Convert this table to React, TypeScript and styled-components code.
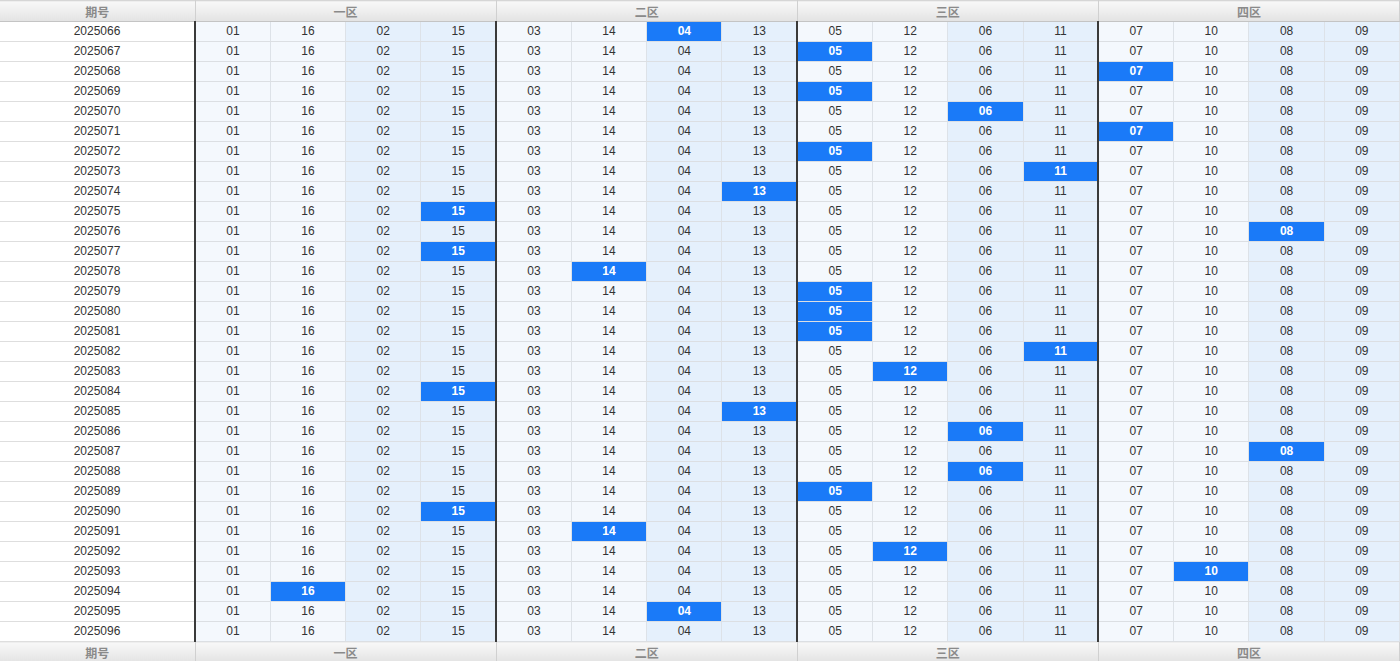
import React from "react";
import styled, { createGlobalStyle } from "styled-components";

const Global = createGlobalStyle`
  html, body { margin: 0; padding: 0; background: #fff; }
  body { font-family: "Liberation Sans", Arial, "Noto Sans CJK SC", sans-serif; }
`;

const Table = styled.table`
  width: 1400px;
  border-collapse: collapse;
  table-layout: fixed;
  font-size: 12px;
  color: #333;
`;

const HeadCell = styled.th<{ $top?: boolean }>`
  height: 20px;
  padding: 0;
  font-weight: bold;
  font-size: 12px;
  color: #8a8a8a;
  text-align: center;
  background: linear-gradient(#f8f8f8, #e3e3e3);
  border-right: 1px solid #d0d0d0;
  border-bottom: 1px solid ${(p) => (p.$top ? "#c4c4c4" : "#d6d6d6")};
  border-top: 1px solid ${(p) => (p.$top ? "#d6d6d6" : "#c4c4c4")};
  font-family: "Liberation Sans", "Noto Sans CJK SC", sans-serif;
`;

const IssueCell = styled.td`
  height: 19px;
  padding: 0;
  text-align: center;
  background: #fff;
  border-bottom: 1px solid #dedede;
  line-height: 19px;
`;

const NumCell = styled.td<{ $shade: boolean; $hit: boolean; $zoneStart: boolean }>`
  height: 19px;
  padding: 0;
  text-align: center;
  line-height: 19px;
  background: ${(p) => (p.$hit ? "#1a7af8" : p.$shade ? "#e5f0fc" : "#f4f8fd")};
  color: ${(p) => (p.$hit ? "#fff" : "#333")};
  font-weight: ${(p) => (p.$hit ? "bold" : "normal")};
  border-bottom: 1px solid #dcdfe3;
  border-right: 1px solid #dde2e8;
  border-left: ${(p) => (p.$zoneStart ? "2px solid #3a3a3a" : "none")};
`;

const zones = ["一区", "二区", "三区", "四区"];
const nums = ["01", "16", "02", "15", "03", "14", "04", "13", "05", "12", "06", "11", "07", "10", "08", "09"];
const hits = [6, 8, 12, 8, 10, 12, 8, 11, 7, 3, 14, 3, 5, 8, 8, 8, 11, 9, 3, 7, 10, 14, 10, 8, 3, 5, 9, 13, 1, 6, -1];

const HeaderRow: React.FC<{ top?: boolean }> = ({ top }) => (
  <tr>
    <HeadCell $top={top}>期号</HeadCell>
    {zones.map((z) => (
      <HeadCell key={z} colSpan={4} $top={top}>
        {z}
      </HeadCell>
    ))}
  </tr>
);

export default function App() {
  return (
    <>
      <Global />
      <Table>
        <colgroup>
          <col style={{ width: 195 }} />
          {nums.map((n, i) => (
            <col key={i} />
          ))}
        </colgroup>
        <thead>
          <HeaderRow top />
        </thead>
        <tbody>
          {hits.map((h, r) => (
            <tr key={r}>
              <IssueCell>{2025066 + r}</IssueCell>
              {nums.map((n, c) => (
                <NumCell key={c} $shade={c % 4 >= 2} $hit={c === h} $zoneStart={c % 4 === 0}>
                  {n}
                </NumCell>
              ))}
            </tr>
          ))}
        </tbody>
        <tfoot>
          <HeaderRow />
        </tfoot>
      </Table>
    </>
  );
}
